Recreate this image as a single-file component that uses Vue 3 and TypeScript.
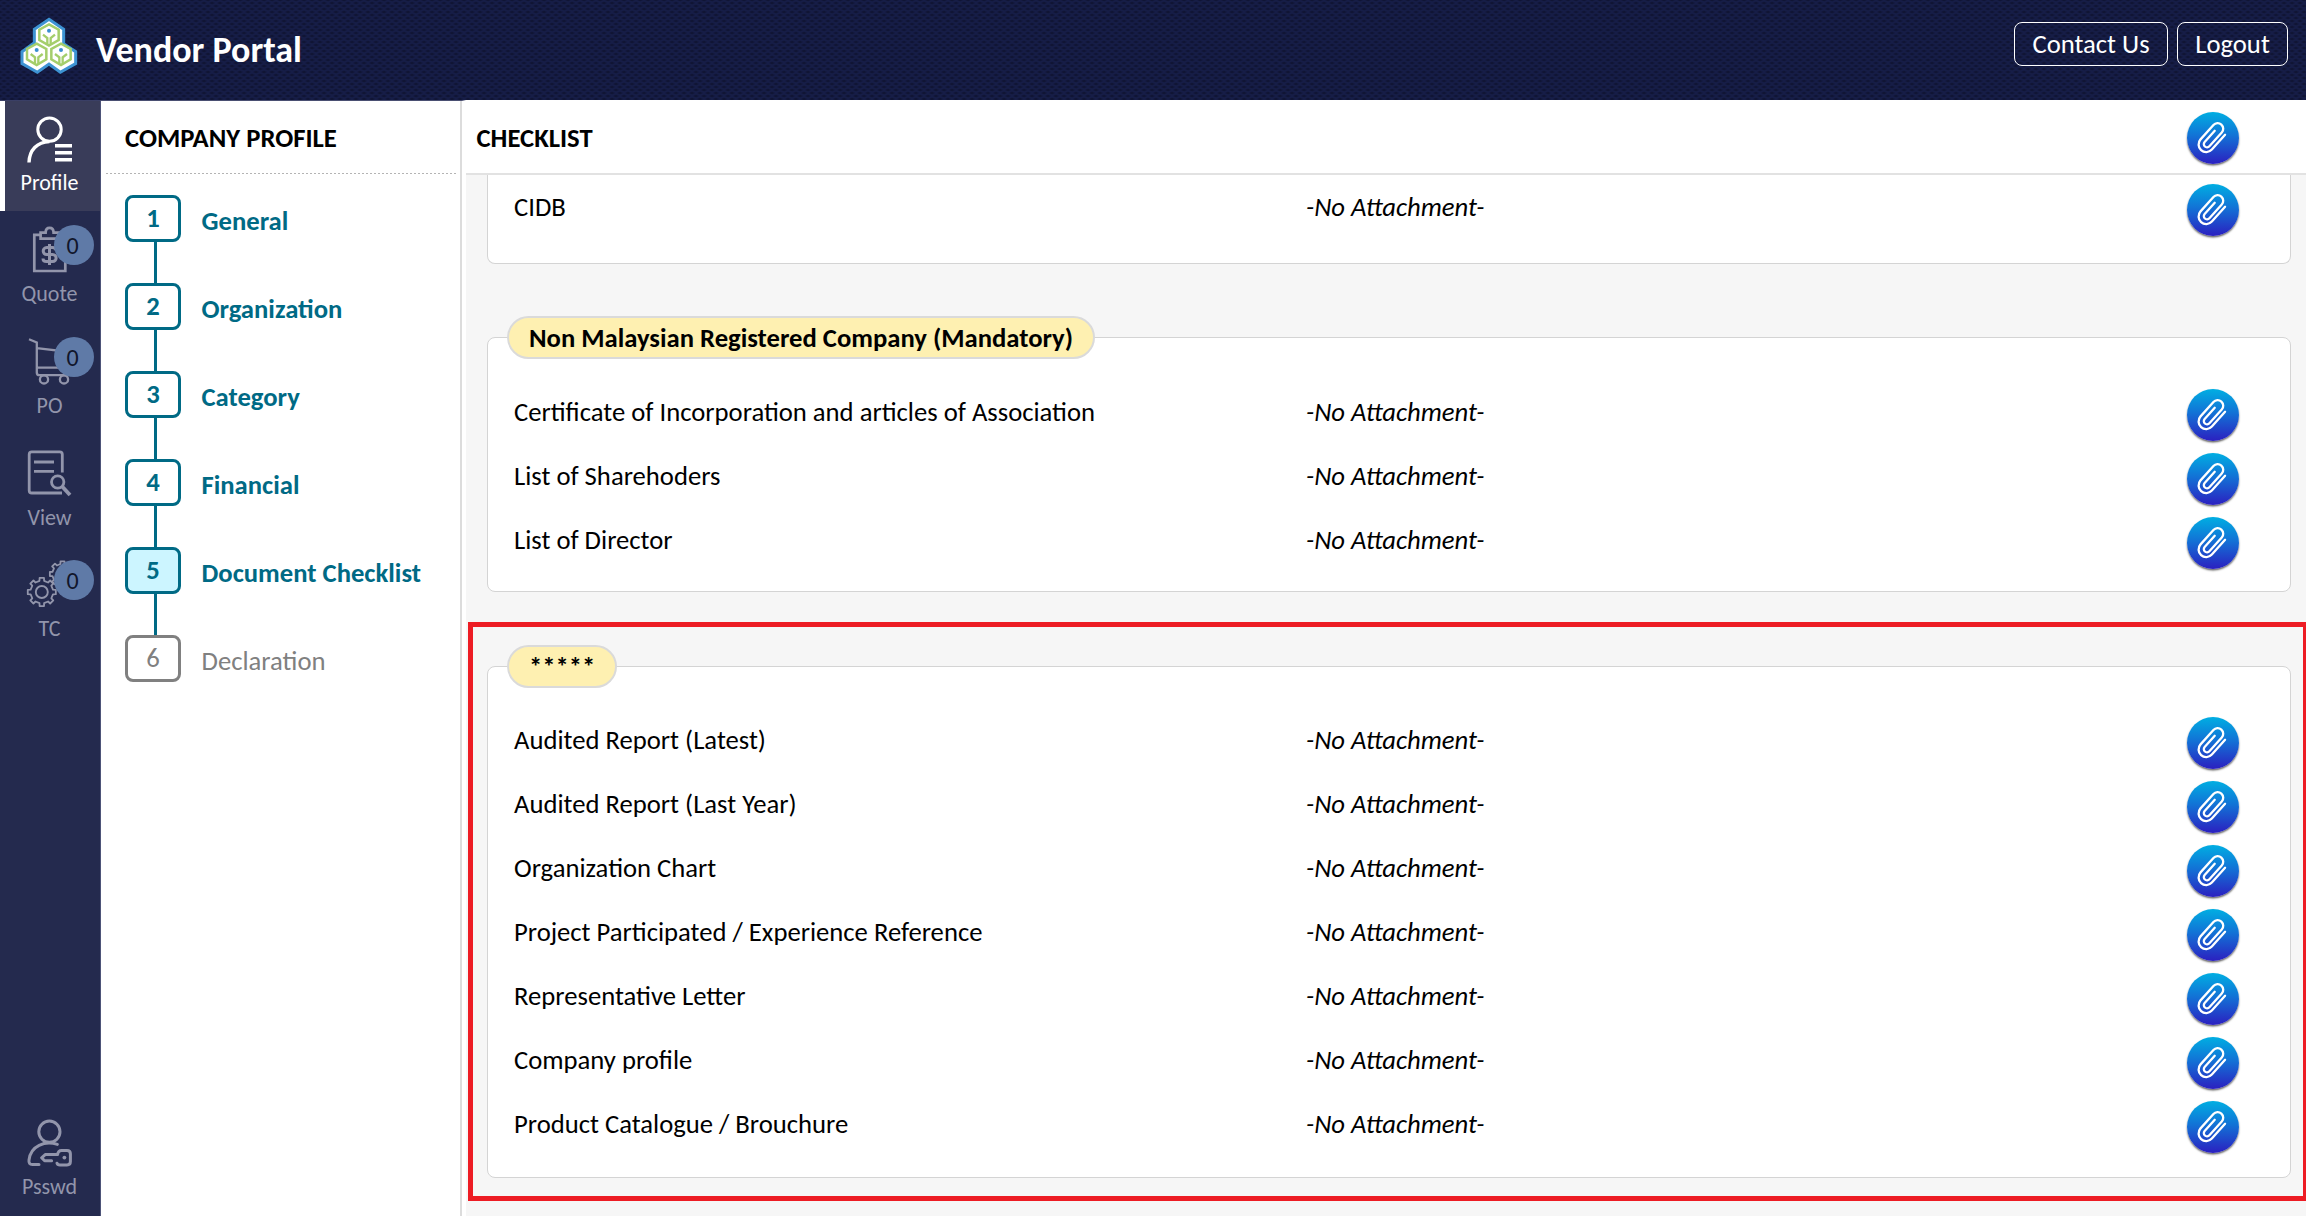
<script setup lang="ts">
interface NavItem {
  id: 'profile' | 'quote' | 'po' | 'view' | 'tc'
  label: string
  badge?: number
}
interface Section {
  title?: string
  items: string[]
}

const nav: NavItem[] = [
  { id: 'profile', label: 'Profile' },
  { id: 'quote', label: 'Quote', badge: 0 },
  { id: 'po', label: 'PO', badge: 0 },
  { id: 'view', label: 'View' },
  { id: 'tc', label: 'TC', badge: 0 },
]

const steps = ['General', 'Organization', 'Category', 'Financial', 'Document Checklist', 'Declaration']
const currentStep = 5

const sections: Section[] = [
  { items: ['CIDB'] },
  {
    title: 'Non Malaysian Registered Company (Mandatory)',
    items: ['Certificate of Incorporation and articles of Association', 'List of Sharehoders', 'List of Director'],
  },
]

const highlighted: Section = {
  title: '*****',
  items: [
    'Audited Report (Latest)',
    'Audited Report (Last Year)',
    'Organization Chart',
    'Project Participated / Experience Reference',
    'Representative Letter',
    'Company profile',
    'Product Catalogue / Brouchure',
  ],
}

// Closed outline of a toothed wheel: each tooth is a flat top between two flanks.
function gear(cx: number, cy: number, outer: number, inner: number, teeth: number): string {
  const pts: string[] = []
  const step = (Math.PI * 2) / teeth
  for (let i = 0; i < teeth; i++) {
    const a = i * step - Math.PI / 2
    const corners: [number, number][] = [
      [a - step * 0.26, inner],
      [a - step * 0.2, outer],
      [a + step * 0.2, outer],
      [a + step * 0.26, inner],
    ]
    for (const [t, r] of corners) {
      pts.push(`${(cx + Math.cos(t) * r).toFixed(2)} ${(cy + Math.sin(t) * r).toFixed(2)}`)
    }
  }
  return `M${pts.join('L')}Z`
}
const bigGear = gear(15.8, 31, 14.2, 11.4, 8)
const smallGear = gear(36.5, 13, 12.8, 10.2, 8)

const clip = 'M7.7 -10.4V9.4A7.6 7.6 0 0 1 -7.5 9.4V-9.9A5.6 5.6 0 0 1 3.7 -9.9V8.6A3.2 3.2 0 0 1 -2.7 8.6V-6.5'
</script>

<template>
  <div class="app">
    <svg class="defs" width="0" height="0" aria-hidden="true">
      <defs>
        <g id="cell">
          <path d="M0 -32L29 -16V15L0 32L-29 15V-16Z" fill="none" stroke="#a4ce6b" stroke-width="7.5" />
          <path d="M-5 30V9L-18 -1M5 30V9L18 -1" fill="none" stroke="#a4ce6b" stroke-width="7" />
          <circle cx="0" cy="-13" r="6" fill="#3a8fd0" />
        </g>
      </defs>
    </svg>

    <header class="topbar">
      <svg class="logo" viewBox="60 50 174 174">
        <path
          d="M147 57L191 87V130L227 154V190L181 216L147 191L112 216L66 190V154L103 127V87Z"
          fill="#fff" stroke="#3d93d3" stroke-width="9"
        />
        <use href="#cell" x="147" y="104" />
        <use href="#cell" x="110" y="162" />
        <use href="#cell" x="183" y="162" />
      </svg>
      <h1>Vendor Portal</h1>
      <div class="actions">
        <button class="contact">Contact Us</button>
        <button class="logout">Logout</button>
      </div>
    </header>

    <div class="body">
      <nav class="rail">
        <a v-for="n in nav" :key="n.id" class="tile" :class="[n.id, { active: n.id === 'profile' }]">
          <svg class="glyph" viewBox="0 0 48 48">
            <template v-if="n.id === 'profile'">
              <circle cx="23.5" cy="13.6" r="11.7" stroke-width="3" />
              <path d="M3 46.5C3.4 34 11 26 23.5 25.6" stroke-width="3.4" />
              <path d="M29 29.7H46M29 36.7H46M29 43.7H46" stroke-width="3.4" />
            </template>
            <template v-else-if="n.id === 'quote'">
              <path d="M14 8.8H8.3V45H39.3V8.8H34" stroke-width="2.7" />
              <path d="M14.6 12.6V6.6H19.6C19.8 0.4 27.4 0.4 27.6 6.6H33V12.6Z" stroke-width="2.7" />
              <path d="M30 24.6C30 22.4 28.6 21.6 26.5 21.6H20.8C16 21.6 16 28.6 20.8 28.6H26.4C31.4 28.6 31.4 35.4 26.4 35.4H20.4C18.2 35.4 17 34.6 17 32.4M23.5 18V39" stroke-width="3" />
            </template>
            <template v-else-if="n.id === 'po'">
              <path d="M3 1.2L10.8 4.4V34.4C10.8 36.4 11.8 37.2 13.4 37.2H43M10.8 10.2L44 14L40.5 29.6H11" stroke-width="2.3" />
              <circle cx="18" cy="41.4" r="4.1" stroke-width="2.3" />
              <circle cx="38" cy="41.4" r="4.1" stroke-width="2.3" />
            </template>
            <template v-else-if="n.id === 'view'">
              <path d="M36.3 22.5V4.4Q36.3 1.8 33.7 1.8H5.8Q3.2 1.8 3.2 4.4V40.4Q3.2 43 5.8 43H36" stroke-width="2.8" />
              <path d="M8 12H28M8 21.4H28" stroke-width="2.8" />
              <circle cx="31.7" cy="32" r="6.2" stroke-width="2.8" />
              <path d="M36.4 36.8L44 45" stroke-width="3.8" />
            </template>
            <template v-else>
              <path :d="smallGear" stroke-width="1.8" stroke-linejoin="round" />
              <path class="cover" :d="bigGear" stroke-width="1.8" stroke-linejoin="round" />
              <circle cx="15.8" cy="31" r="6" stroke-width="1.9" />
            </template>
          </svg>
          <span class="label">{{ n.label }}</span>
          <span v-if="n.badge !== undefined" class="badge">{{ n.badge }}</span>
        </a>
        <a class="tile psswd">
          <svg class="glyph" viewBox="0 0 48 48" stroke-linecap="round" stroke-linejoin="round">
            <circle cx="23.4" cy="11.7" r="10.6" stroke-width="3" />
            <path d="M31.4 24.4C19 20.4 4.6 25.6 3 40Q2.4 44.6 6.4 44.6H13" stroke-width="3" />
            <path d="M31 43.2Q31.4 45 34 45H41Q44.4 45 44.4 41.6V33.8Q44.4 30.4 41 30.4H35.6Q32 30.4 31.6 34.6H19.2L15.6 37.8L18.6 40.8H25.6" stroke-width="3" />
            <circle class="dot" cx="38.4" cy="37.6" r="1.9" />
          </svg>
          <span class="label">Psswd</span>
        </a>
      </nav>

      <aside class="panel">
        <h2>COMPANY PROFILE</h2>
        <ol class="steps">
          <li v-for="(s, i) in steps" :key="s" :class="{ current: i + 1 === currentStep, pending: i + 1 > currentStep }">
            <span class="num">{{ i + 1 }}</span>
            <span class="name">{{ s }}</span>
          </li>
        </ol>
      </aside>

      <main class="main">
        <div class="mainhead">
          <h2>CHECKLIST</h2>
          <svg class="attach" viewBox="-26 -26 52 52">
            <g transform="translate(-0.6 -0.6) rotate(42)"><path :d="clip" /></g>
          </svg>
        </div>
        <section v-for="(sec, si) in sections" :key="si" class="card" :class="{ cut: !sec.title }">
          <h3 v-if="sec.title" class="legend">{{ sec.title }}</h3>
          <div v-for="it in sec.items" :key="it" class="row">
            <span class="doc">{{ it }}</span>
            <em class="state">-No Attachment-</em>
            <svg class="attach" viewBox="-26 -26 52 52">
              <g transform="translate(-0.6 -0.6) rotate(42)"><path :d="clip" /></g>
            </svg>
          </div>
        </section>
        <div class="frame">
          <section class="card">
            <h3 class="legend">{{ highlighted.title }}</h3>
            <div v-for="it in highlighted.items" :key="it" class="row">
              <span class="doc">{{ it }}</span>
              <em class="state">-No Attachment-</em>
              <svg class="attach" viewBox="-26 -26 52 52">
                <g transform="translate(-0.6 -0.6) rotate(42)"><path :d="clip" /></g>
              </svg>
            </div>
          </section>
        </div>
      </main>
    </div>
  </div>
</template>

<style>
body {
  overflow: hidden;
}
</style>

<style scoped>
* {
  box-sizing: border-box;
}
.app {
  width: 2306px;
  height: 1216px;
  overflow: hidden;
  display: flex;
  flex-direction: column;
  font-family: Calibri, Carlito, Lato, sans-serif;
  font-size: 26.67px;
  color: #000;
  background: #fff;
}
.defs {
  position: absolute;
}
h1,
h2,
h3,
ol {
  margin: 0;
  padding: 0;
}

/* top bar */
.topbar {
  flex: none;
  height: 100px;
  display: flex;
  align-items: flex-start;
  padding: 0 18px 0 20px;
  background-color: #161d47;
  background-image:
    radial-gradient(ellipse 3.2px 1.7px at center, #101534 30%, transparent 100%),
    radial-gradient(ellipse 3.2px 1.7px at center, #101534 30%, transparent 100%);
  background-size: 8px 6px;
  background-position: 0 0, 4px 3px;
}
.logo {
  width: 58px;
  height: 58px;
  margin-top: 16.5px;
}
h1 {
  margin: 27px 0 0 18px;
  font-size: 36px;
  line-height: 46px;
  color: #fff;
}
.actions {
  margin: 22px 0 0 auto;
  display: flex;
  gap: 9px;
}
.actions button {
  height: 44px;
  padding: 0 0 1px;
  font: inherit;
  line-height: 40px;
  color: #fff;
  background: transparent;
  border: 1.67px solid #fff;
  border-radius: 8px;
}
.contact {
  width: 154px;
}
.logout {
  width: 111px;
}

.body {
  flex: 1;
  min-height: 0;
  display: flex;
}

/* icon rail */
.rail {
  flex: none;
  width: 101px;
  padding-top: 1px;
  display: flex;
  flex-direction: column;
  background: #242a4e;
  border-right: 1px solid #4d5378;
  border-top: 1px solid #3a3f66;
}
.tile {
  position: relative;
  flex: none;
  height: 112px;
  padding: 15px 1px 0 0;
  display: flex;
  flex-direction: column;
  align-items: center;
  color: #9295ab;
}
.tile.profile {
  height: 110px;
  margin-top: -1px;
  padding-left: 0;
  color: #fff;
  background: linear-gradient(90deg, #fff 5px, #393c59 5px);
}
.tile.view {
  height: 111px;
}
.tile.psswd {
  margin-top: auto;
  margin-bottom: -1px;
}
.glyph {
  flex: none;
  width: 48px;
  height: 48px;
  fill: none;
  stroke: currentColor;
  overflow: visible;
}
.glyph .cover {
  fill: #242a4e;
}
.glyph .dot {
  fill: currentColor;
  stroke: none;
}
.label {
  margin-top: 8px;
  font-size: 22px;
  line-height: 24px;
}
.profile .label,
.psswd .label {
  margin-top: 7px;
}
.badge {
  position: absolute;
  left: 54px;
  top: 13.5px;
  width: 40px;
  height: 40px;
  padding-right: 3px;
  border-radius: 50%;
  background: #5f7aa7;
  color: #11162b;
  font-size: 24px;
  line-height: 42px;
  text-align: center;
}

/* steps panel */
.panel {
  flex: none;
  width: 365px;
  padding: 1px 8px 0 5px;
  border-top: 1px solid #4a4f72;
  border-right: 4px solid #fff;
  box-shadow: inset -2px 0 0 #dcdcdc;
}
.panel h2,
.mainhead h2 {
  font-size: 26.67px;
  line-height: 32px;
}
.panel h2 {
  height: 72px;
  margin: 0 -4px 0 0;
  padding: 20px 0 0 19px;
  background: repeating-linear-gradient(90deg, #b4b4b4 0 2px, #fff 2px 4px) 0 100% / 100% 1.5px no-repeat;
}
.steps {
  list-style: none;
  padding: 21px 0 0 19px;
}
.steps li {
  position: relative;
  height: 88px;
  display: flex;
  align-items: flex-start;
  font-weight: bold;
  color: #006a85;
}
.steps li:not(:last-child)::after {
  content: '';
  position: absolute;
  left: 29px;
  top: 46px;
  width: 3px;
  height: 42px;
  background: #006a85;
}
.num {
  width: 56px;
  height: 47px;
  border: 3px solid currentColor;
  border-radius: 8px;
  line-height: 40px;
  text-align: center;
}
.name {
  margin-left: 20.5px;
  line-height: 52px;
}
.current .num {
  background: #ccf5ff;
}
.steps .pending {
  font-weight: normal;
  color: #808080;
}

/* checklist */
.main {
  flex: 1;
  min-width: 0;
  display: flex;
  flex-direction: column;
  background: #f6f6f6;
}
.mainhead {
  flex: none;
  height: 75px;
  display: flex;
  justify-content: space-between;
  align-items: flex-start;
  padding: 12px 67px 0 10.5px;
  background: #fff;
  border-bottom: 2px solid #e2e2e2;
}
.mainhead h2 {
  margin-top: 10px;
}
.card {
  position: relative;
  flex: none;
  width: 1804px;
  margin: 73px 0 0 21px;
  padding: 45px 51px 16px 26px;
  border: 1.67px solid #d4d4d4;
  border-radius: 8px;
  background: #fff;
}
.card.cut {
  margin-top: 0;
  height: 89px;
  padding-top: 3px;
  border-top: 0;
  border-top-left-radius: 0;
  border-top-right-radius: 0;
}
.row {
  height: 64px;
  display: flex;
  align-items: flex-start;
  line-height: 58px;
  white-space: nowrap;
}
.doc {
  width: 792px;
}
.row .attach {
  margin: 5.5px 0 0 auto;
}
.legend {
  position: absolute;
  left: 19px;
  top: -22px;
  height: 43px;
  padding: 0 20px;
  border: 2px solid #dadada;
  border-radius: 22px;
  background: #fef0b1;
  font-size: 26.67px;
  line-height: 41px;
  white-space: nowrap;
}
.attach {
  flex: none;
  width: 52px;
  height: 52px;
  border-radius: 50%;
  background: linear-gradient(#00aee2, #1273d6 45%, #2b20c0);
  box-shadow: 0 1.5px 2px rgba(0, 0, 0, 0.6);
  fill: none;
  stroke: #fff;
  stroke-width: 2.3;
  stroke-linecap: round;
}
.frame {
  flex: none;
  height: 579px;
  margin: 30px 0 0 2px;
  border: 5px solid #ed1c24;
  border-right-width: 3px;
}
.frame .card {
  margin: 39px 0 0 14px;
  padding-top: 43.5px;
  padding-bottom: 18px;
}
.frame .row .attach {
  margin-top: 6px;
}
</style>
